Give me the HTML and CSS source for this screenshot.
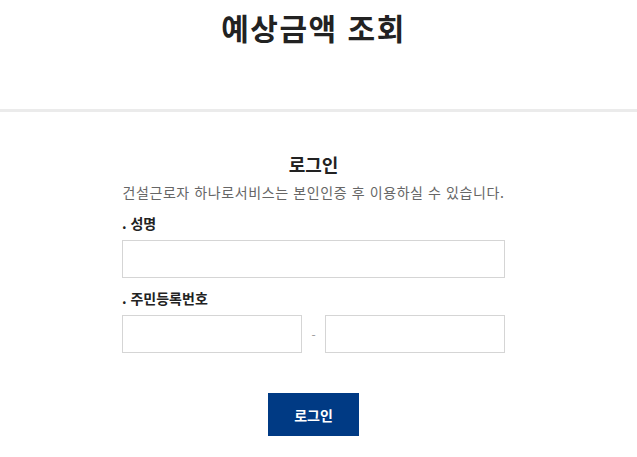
FILE: index.html
```html
<!DOCTYPE html>
<html lang="ko">
<head>
<meta charset="utf-8">
<link rel="stylesheet" href="styles.css">
</head>
<body>
<header class="top">
  <h1 class="title">예상금액 조회</h1>
</header>
<main class="login">
  <h2 class="login-title">로그인</h2>
  <p class="login-desc">건설근로자 하나로서비스는 본인인증 후 이용하실 수 있습니다.</p>
  <div class="field">
    <label class="label">. 성명</label>
    <input class="input" type="text">
  </div>
  <div class="field">
    <label class="label">. 주민등록번호</label>
    <div class="jumin">
      <input class="input" type="text">
      <span class="dash">-</span>
      <input class="input" type="password">
    </div>
  </div>
  <div class="actions">
    <button class="btn" type="button">로그인</button>
  </div>
</main>
</body>
</html>
```
FILE: styles.css
```css
* { box-sizing: border-box; }
body {
  margin: 0;
  background: #fff;
  font-family: "Noto Sans CJK KR", "Noto Sans", sans-serif;
  color: #222;
}
.top {
  height: 112px;
  border-bottom: 3px solid #ebebeb;
  width: 100%;
  padding-top: 5px;
}
.title {
  margin: 0;
  text-align: center;
  font-size: 30px;
  font-weight: 700;
  line-height: 44px;
  color: #222;
  letter-spacing: 1.5px;
  padding-right: 10px;
}
.login {
  width: 383px;
  margin-left: 122px;
  padding-top: 38px;
}
.login-title {
  margin: 0;
  text-align: center;
  font-size: 18px;
  font-weight: 700;
  line-height: 28px;
  color: #222;
}
.login-desc {
  margin: 3px 0 0;
  text-align: center;
  font-size: 14px;
  line-height: 22px;
  color: #666;
  white-space: nowrap;
  letter-spacing: 0.6px;
}
.field {
  margin-top: 9px;
}
.field + .field {
  margin-top: 9px;
}
.label {
  display: block;
  font-size: 14px;
  font-weight: 700;
  line-height: 22px;
  color: #222;
  margin-bottom: 6px;
}
.input {
  display: block;
  width: 100%;
  height: 38px;
  border: 1px solid #d5d5d5;
  background: #fff;
  margin: 0;
  padding: 0 8px;
  outline: none;
}
.jumin {
  display: flex;
  align-items: center;
}
.jumin .input {
  width: 180px;
}
.dash {
  width: 23px;
  text-align: center;
  color: #999;
  font-size: 12px;
}
.actions {
  display: flex;
  justify-content: center;
  margin-top: 40px;
}
.btn {
  width: 91px;
  height: 43px;
  border: 0;
  background: #003a84;
  color: #fff;
  font-family: inherit;
  font-size: 14px;
  font-weight: 700;
  cursor: pointer;
}
```
